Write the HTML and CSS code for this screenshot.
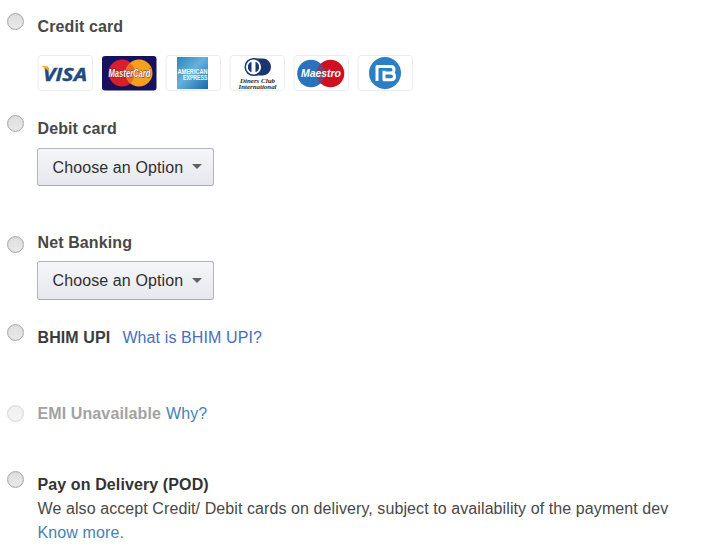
FILE: index.html
```
<!DOCTYPE html>
<html lang="en">
<head>
<meta charset="utf-8">
<title>Payment options</title>
<link rel="stylesheet" href="styles.css">
</head>
<body>
<main class="options">
  <section class="option credit">
    <span class="radio"></span>
    <div class="body">
      <h2 class="title">Credit card</h2>
      <div class="cards">
        <svg class="card" viewBox="0 0 56 36"><rect class="frame" x="1" y=".5" width="54.500" height="35" rx="3"/><text class="visa" x="6" y="25.500" textLength="44" lengthAdjust="spacingAndGlyphs">VISA</text><path fill="#e6ae45" d="M4 11h5.500q2 0 2.300 2l.8 5Q9.500 13 4 11z"/></svg>
        <svg class="card" viewBox="0 0 56 36"><rect x="1" y="1" width="54.500" height="34.500" rx="3" fill="#17105e"/><circle cx="21" cy="18" r="13.500" fill="#d7202b"/><circle cx="38" cy="18" r="13.500" fill="#f5a11c"/><path d="M29.500 8a13.500 13.500 0 0 1 0 20 13.500 13.500 0 0 1 0-20z" fill="#e76d22"/><text class="brand shadow" x="7.500" y="21.500" font-size="10" textLength="42" lengthAdjust="spacingAndGlyphs">MasterCard</text></svg>
        <svg class="card" viewBox="0 0 56 36"><defs><linearGradient id="amex" x2="1" y2="1"><stop stop-color="#2c83b9"/><stop offset=".45" stop-color="#67b1dc"/><stop offset="1" stop-color="#1769ad"/></linearGradient></defs><rect class="frame" x="1" y=".5" width="54.500" height="35" rx="3"/><rect x="12" y="2" width="31" height="32" fill="url(#amex)"/><text class="amex" x="12.500" y="18.500" textLength="30" lengthAdjust="spacingAndGlyphs">AMERICAN</text><text class="amex" x="18" y="25" textLength="24.500" lengthAdjust="spacingAndGlyphs">EXPRESS</text></svg>
        <svg class="card" viewBox="0 0 56 36"><rect class="frame" x="1" y=".5" width="54.500" height="35" rx="3"/><path fill="#1c376f" d="M25 3.500h9a8 8.500 0 0 1 0 17h-9z"/><circle cx="24.500" cy="12" r="8.300" fill="#fff" stroke="#1c376f" stroke-width="1.500"/><path fill="#1c376f" d="M22.500 6.700v10.600a5.700 5.700 0 0 1 0-10.600zM26.500 6.700a5.700 5.700 0 0 1 0 10.600z"/><text class="diners" x="11" y="27.500" textLength="35" lengthAdjust="spacingAndGlyphs">Diners Club</text><text class="diners" x="9.500" y="34" textLength="38" lengthAdjust="spacingAndGlyphs">International</text></svg>
        <svg class="card" viewBox="0 0 56 36"><rect class="frame" x="1" y=".5" width="54.500" height="35" rx="3"/><circle cx="18" cy="18.500" r="13.800" fill="#2873bd"/><circle cx="37.500" cy="18.500" r="13.800" fill="#ce1020"/><path d="M27.750 8.700a13.800 13.800 0 0 1 0 19.600 13.800 13.800 0 0 1 0-19.600z" fill="#74436f"/><text class="brand" x="8" y="22" font-size="10" textLength="40" lengthAdjust="spacingAndGlyphs">Maestro</text></svg>
        <svg class="card" viewBox="0 0 56 36"><rect class="frame" x="1" y=".5" width="54.500" height="35" rx="3"/><circle cx="28" cy="18" r="16" fill="#2b7fc5"/><path class="bhim" d="M20 26V11.500h14q3 0 3 3.300 0 3-3 3.300 3.500.2 3.500 3.300 0 3.300-3.500 3.300h-7v-9M27 18h7"/></svg>
      </div>
    </div>
  </section>
  <section class="option debit">
    <span class="radio"></span>
    <div class="body">
      <h2 class="title">Debit card</h2>
      <button class="select" type="button"><span>Choose an Option</span><i class="caret"></i></button>
    </div>
  </section>
  <section class="option net">
    <span class="radio"></span>
    <div class="body">
      <h2 class="title">Net Banking</h2>
      <button class="select" type="button"><span>Choose an Option</span><i class="caret"></i></button>
    </div>
  </section>
  <section class="option bhim-upi">
    <span class="radio"></span>
    <div class="body line">
      <h2 class="title">BHIM UPI</h2>
      <a class="link indigo" href="#">What is BHIM UPI?</a>
    </div>
  </section>
  <section class="option emi">
    <span class="radio disabled"></span>
    <div class="body line">
      <h2 class="title">EMI Unavailable</h2>
      <a class="link" href="#">Why?</a>
    </div>
  </section>
  <section class="option pod">
    <span class="radio"></span>
    <div class="body">
      <h2 class="title">Pay on Delivery (POD)</h2>
      <p class="note">We also accept Credit/ Debit cards on delivery, subject to availability of the payment dev</p>
      <a class="link" href="#">Know more.</a>
    </div>
  </section>
</main>
</body>
</html>
```
FILE: styles.css
```
* { box-sizing: border-box; }
body {
  margin: 0;
  background: #fff;
  color: #484848;
  font: 16px/24px "Liberation Sans", Arial, sans-serif;
  letter-spacing: .11px;
}
.options { padding: 15px 0 0 7.4px; height: 558px; overflow: hidden; }
.option { display: grid; grid-template-columns: 30.1px 650px; align-items: start; }
.credit { height: 102px; }
.debit { height: 114px; }
.net { height: 95px; }
.bhim-upi { height: 76px; }
.emi { height: 71px; }
.title { margin: 0; font-size: 16px; line-height: 24px; font-weight: 700; white-space: nowrap; }
.radio {
  width: 17px;
  height: 17px;
  border: 1px solid #ababab;
  border-radius: 50%;
  background: linear-gradient(#dedede, #e9e9e9);
  box-shadow: inset 0 0 1px #bbb;
}
.credit .radio { margin-top: -2px; }
.debit .radio, .bhim-upi .radio { margin-top: -2px; }
.net .radio { margin-top: 5px; }
.emi .radio { margin-top: 3px; }
.pod .radio { margin-top: -2px; }
.disabled { opacity: .45; }
.cards { display: flex; gap: 8px; margin: 16px 0 0 -.5px; }
.card { display: block; width: 56px; height: 36px; letter-spacing: 0; }
.frame { fill: #fff; stroke: #ededed; }
.visa { font: italic 700 18px "Open Sans", sans-serif; fill: #204a82; stroke: #204a82; stroke-width: .4px; }
.brand { font-family: "Liberation Sans", sans-serif; font-style: italic; font-weight: 700; fill: #fff; }
.shadow { paint-order: stroke; stroke: #601b35; stroke-width: .8px; }
.amex { font: 700 6.5px "Liberation Sans", sans-serif; fill: #fff; }
.diners { font: italic 700 7px "Liberation Serif", serif; fill: #292929; }
.bhim { fill: none; stroke: #fff; stroke-width: 3px; stroke-linejoin: round; }
.select {
  display: flex;
  align-items: center;
  justify-content: space-between;
  width: 176.5px;
  height: 39px;
  padding: 1px 11px 0 14px;
  border: 1px solid #b3b5ba;
  border-bottom-color: #a6a9af;
  border-radius: 3px;
  background: linear-gradient(#f5f6f9, #e6e8ed);
  color: #2f2f32;
  font: inherit;
  letter-spacing: inherit;
}
.debit .select { height: 38px; margin: 7px 0 0; }
.net .select { margin: 6px 0 0; }
.caret { margin-top: -2px; border: 5px solid transparent; border-top-color: #606164; border-bottom: 0; }
.line { display: flex; }
.link { color: #4581b7; text-decoration: none; white-space: nowrap; }
.indigo { margin-left: 12px; color: #4670bd; }
.emi .title { color: #a2a2a2; margin-right: 5px; }
.pod .title { color: #333; }
.bhim-upi .title { color: #3c3c3c; }
.note { margin: 0; white-space: nowrap; letter-spacing: .09px; }
```
